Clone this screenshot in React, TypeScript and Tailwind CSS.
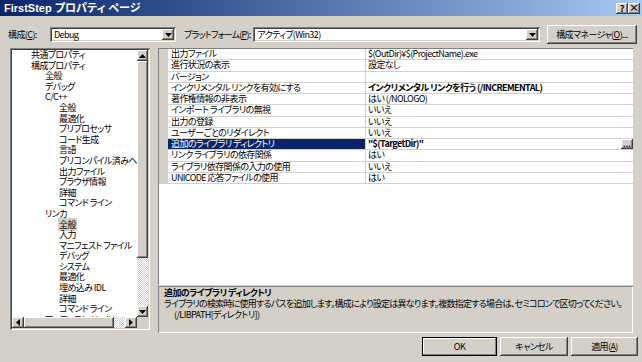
import React from "react";

const raised =
  "shadow-[inset_-1px_-1px_#404040,inset_1px_1px_#ffffff,inset_-2px_-2px_#808080,inset_2px_2px_#d4d0c8]";
const sunken =
  "shadow-[inset_1px_1px_#808080,inset_-1px_-1px_#ffffff,inset_2px_2px_#404040,inset_-2px_-2px_#d4d0c8]";
const jp = "font-['Noto_Sans_CJK_JP',sans-serif] [font-feature-settings:'palt']";
const checker = "bg-[repeating-conic-gradient(#ffffff_0_25%,#d4d0c8_0_50%)] bg-[length:2px_2px]";

const Arrow = ({ dir }: { dir: "up" | "down" | "left" | "right" }) => {
  const pts = {
    up: "0,4 7,4 3.5,0",
    down: "0,0 7,0 3.5,4",
    left: "4,0 4,7 0,3.5",
    right: "0,0 0,7 4,3.5",
  }[dir];
  const w = dir === "up" || dir === "down" ? 7 : 4;
  const h = dir === "up" || dir === "down" ? 4 : 7;
  return (
    <svg width={w} height={h} viewBox={`0 0 ${w} ${h}`}>
      <polygon points={pts} fill="#000" />
    </svg>
  );
};

const Combo = ({ value, className }: { value: string; className: string }) => (
  <div className={`flex h-[15px] items-stretch bg-white p-[2px] ${sunken} ${className}`}>
    <div className="flex flex-1 items-center whitespace-nowrap pl-[2px] leading-none">{value}</div>
    <div className={`flex w-[12px] items-center justify-center bg-[#d4d0c8] ${raised}`}>
      <Arrow dir="down" />
    </div>
  </div>
);

type TreeItem = { label: string; level: number; selected?: boolean };

const TREE: TreeItem[] = [
  { label: "共通プロパティ", level: 1 },
  { label: "構成プロパティ", level: 1 },
  { label: "全般", level: 2 },
  { label: "デバッグ", level: 2 },
  { label: "C/C++", level: 2 },
  { label: "全般", level: 3 },
  { label: "最適化", level: 3 },
  { label: "プリプロセッサ", level: 3 },
  { label: "コード生成", level: 3 },
  { label: "言語", level: 3 },
  { label: "プリコンパイル済みヘッダ", level: 3 },
  { label: "出力ファイル", level: 3 },
  { label: "ブラウザ情報", level: 3 },
  { label: "詳細", level: 3 },
  { label: "コマンド ライン", level: 3 },
  { label: "リンカ", level: 2 },
  { label: "全般", level: 3, selected: true },
  { label: "入力", level: 3 },
  { label: "マニフェスト ファイル", level: 3 },
  { label: "デバッグ", level: 3 },
  { label: "システム", level: 3 },
  { label: "最適化", level: 3 },
  { label: "埋め込み IDL", level: 3 },
  { label: "詳細", level: 3 },
  { label: "コマンド ライン", level: 3 },
  { label: "マニフェスト ツール", level: 2 },
];

const INDENT: Record<number, string> = { 1: "pl-[18px]", 2: "pl-[32px]", 3: "pl-[46px]" };

type Prop = { name: string; value: string; bold?: boolean; selected?: boolean };

const PROPS: Prop[] = [
  { name: "出力ファイル", value: "$(OutDir)¥$(ProjectName).exe" },
  { name: "進行状況の表示", value: "設定なし" },
  { name: "バージョン", value: "" },
  { name: "インクリメンタル リンクを有効にする", value: "インクリメンタル リンクを行う (/INCREMENTAL)", bold: true },
  { name: "著作権情報の非表示", value: "はい (/NOLOGO)" },
  { name: "インポート ライブラリの無視", value: "いいえ" },
  { name: "出力の登録", value: "いいえ" },
  { name: "ユーザーごとのリダイレクト", value: "いいえ" },
  { name: "追加のライブラリ ディレクトリ", value: "\"$(TargetDir)\"", bold: true, selected: true },
  { name: "リンク ライブラリの依存関係", value: "はい" },
  { name: "ライブラリ依存関係の入力の使用", value: "いいえ" },
  { name: "UNICODE 応答ファイルの使用", value: "はい" },
];

const Button = ({ children, className }: { children: React.ReactNode; className: string }) => (
  <div className={`flex h-[19px] items-center justify-center whitespace-nowrap bg-[#d4d0c8] ${raised} ${className}`}>
    {children}
  </div>
);

export default function App() {
  return (
    <div
      className={`flex h-[362px] w-[642px] flex-col overflow-hidden bg-[#d4d0c8] text-[9px] tracking-[-0.6px] text-black ${jp}`}
    >
      {/* title bar */}
      <div className="flex h-[16px] items-center justify-between bg-linear-to-r from-[#0a246a] to-[#a6caf0] pl-[4px] pr-[2px]">
        <span className="font-['Liberation_Sans','Noto_Sans_CJK_JP',sans-serif] text-[11px] font-bold leading-none tracking-normal text-white">
          FirstStep プロパティ ページ
        </span>
        <div className="flex">
          <div className={`flex h-[11px] w-[12px] items-center justify-center bg-[#d4d0c8] text-[9px] font-bold leading-none tracking-normal ${raised}`}>
            ?
          </div>
          <div className={`flex h-[11px] w-[12px] items-center justify-center bg-[#d4d0c8] text-[10px] font-bold leading-none tracking-normal ${raised}`}>
            ×
          </div>
        </div>
      </div>

      {/* configuration row */}
      <div className="mt-[9px] flex h-[19px] items-center pl-[8px] pr-[5px]">
        <span className="w-[42px] whitespace-nowrap">
          構成(<u>C</u>):
        </span>
        <Combo value="Debug" className="w-[126px]" />
        <span className="ml-[8px] mr-[3px] whitespace-nowrap tracking-[-0.8px]">
          プラットフォーム(<u>P</u>):
        </span>
        <Combo value="アクティブ(Win32)" className="flex-1" />
        <Button className="ml-[7px] w-[90px]">
          構成マネージャ(<u>O</u>)...
        </Button>
      </div>

      {/* main area */}
      <div className="mt-[4px] flex pl-[10px]">
        {/* tree */}
        <div className={`flex h-[282px] w-[140px] flex-col bg-white p-[2px] ${sunken}`}>
          <div className="flex min-h-0 flex-1">
            <div className="flex-1 overflow-hidden">
              {TREE.map((t, i) => (
                <div key={i} className={`h-[10.6px] whitespace-nowrap leading-[10.6px] ${INDENT[t.level]}`}>
                  <span className={t.selected ? "bg-[#d4d0c8] px-px" : "px-px"}>{t.label}</span>
                </div>
              ))}
            </div>
            {/* vertical scrollbar */}
            <div className={`flex w-[11px] flex-col ${checker}`}>
              <div className={`flex h-[11px] items-center justify-center bg-[#d4d0c8] ${raised}`}>
                <Arrow dir="up" />
              </div>
              <div className={`h-[197px] bg-[#d4d0c8] ${raised}`} />
              <div className="flex-1" />
              <div className={`flex h-[11px] items-center justify-center bg-[#d4d0c8] ${raised}`}>
                <Arrow dir="down" />
              </div>
            </div>
          </div>
          {/* horizontal scrollbar */}
          <div className="flex h-[11px]">
            <div className={`flex flex-1 ${checker}`}>
              <div className={`flex w-[12px] items-center justify-center bg-[#d4d0c8] ${raised}`}>
                <Arrow dir="left" />
              </div>
              <div className={`w-[90px] bg-[#d4d0c8] ${raised}`} />
              <div className="flex-1" />
              <div className={`flex w-[12px] items-center justify-center bg-[#d4d0c8] ${raised}`}>
                <Arrow dir="right" />
              </div>
            </div>
            <div className="w-[11px] bg-[#d4d0c8]" />
          </div>
        </div>

        {/* right column */}
        <div className="ml-[8px] flex w-[475px] flex-col">
          <div className="flex h-[237px] flex-col border-t border-l border-[#808080] bg-white">
            {PROPS.map((p, i) => (
              <div key={i} className="flex h-[11.25px] border-b border-[#d4d0c8] leading-[10.25px]">
                <div className="w-[9px] bg-[#d4d0c8]" />
                <div
                  className={`w-[198px] overflow-hidden whitespace-nowrap border-r border-[#d4d0c8] pl-[3px] ${
                    p.selected ? "bg-[#0a246a] text-white" : ""
                  }`}
                >
                  {p.name}
                </div>
                <div className={`flex flex-1 items-center justify-between pl-[2px] ${p.bold ? "font-bold" : ""}`}>
                  <span className="whitespace-nowrap">{p.value}</span>
                  {p.selected && (
                    <div className={`flex h-[10px] w-[12px] items-end justify-center bg-[#d4d0c8] pb-[1px] text-[8px] font-bold leading-none tracking-normal ${raised}`}>
                      ...
                    </div>
                  )}
                </div>
              </div>
            ))}
          </div>
          <div className="mt-[1px] flex h-[47px] flex-col border-t border-l border-[#808080] pl-[5px] pt-0 leading-[11px] shadow-[inset_-1px_-1px_#ffffff]">
            <div className="font-bold">追加のライブラリ ディレクトリ</div>
            <div className="whitespace-nowrap tracking-[-0.75px]">
              ライブラリの検索時に使用するパスを追加します。構成により設定は異なります。複数指定する場合は、セミコロンで区切ってください。
            </div>
            <div className="pl-[10px]">(/LIBPATH[ディレクトリ])</div>
          </div>
        </div>
      </div>

      {/* buttons */}
      <div className="mt-[4px] flex justify-end gap-[3px] pr-[4px]">
        <Button className="w-[75px] shadow-[inset_0_0_0_1px_#000,inset_-2px_-2px_#808080,inset_2px_2px_#ffffff]">OK</Button>
        <Button className="w-[68px]">キャンセル</Button>
        <Button className="w-[67px]">
          適用(<u>A</u>)
        </Button>
      </div>
    </div>
  );
}
